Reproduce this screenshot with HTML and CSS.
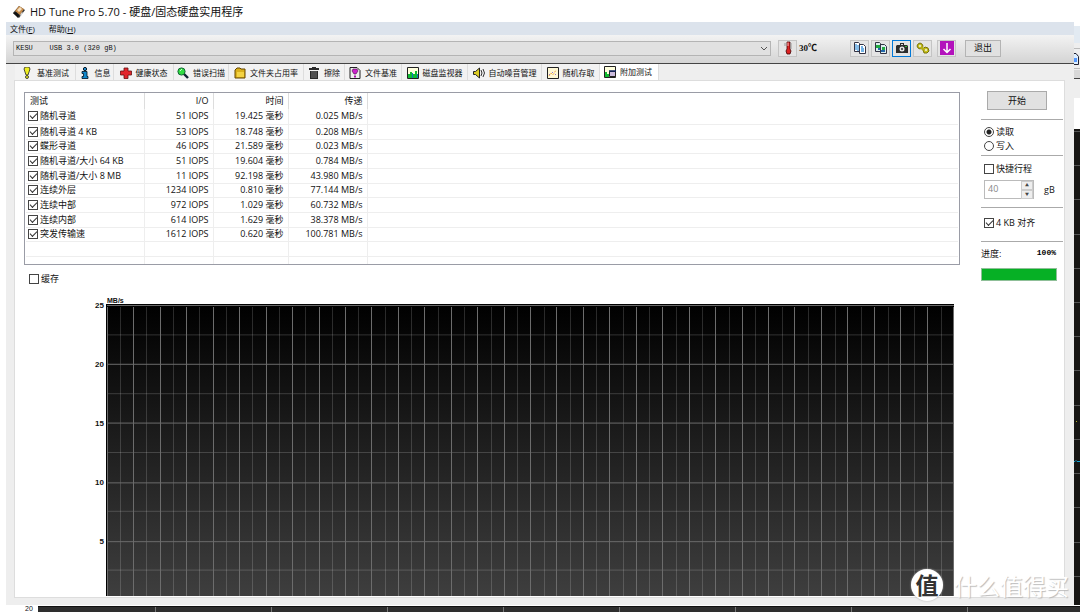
FILE: index.html
```html
<!DOCTYPE html>
<html lang="zh-CN">
<head>
<meta charset="utf-8">
<title>HD Tune Pro 5.70 - 硬盘/固态硬盘实用程序</title>
<link rel="stylesheet" href="styles.css">
</head>
<body>
<div class="desktop">
<main class="window">
  <header class="title">
    <svg class="logo" viewBox="0 0 14 14"><path d="M1 8 7 1l6 4-6 8z" fill="#333"/><path d="m3 6 4-5 5 3-4 6z" fill="#c58a4a"/><path d="m5 5 3-3 2 2-3 3z" fill="#f4dfc0"/><path d="m1 8 3-1 3 3-1 3z" fill="#111"/><path d="m8 10 2-3 1 1-2 3z" fill="#ddd"/></svg>
    <h1>HD Tune Pro 5.70 - 硬盘/固态硬盘实用程序</h1>
  </header>
  <nav class="menu"><button>文件(<u>F</u>)</button><button>帮助(<u>H</u>)</button></nav>
  <div class="toolbar">
    <div class="drive">
      <select aria-label="驱动器"><option>KESU&nbsp;&nbsp;&nbsp;&nbsp;USB 3.0 (320 gB)</option></select>
      <svg viewBox="0 0 8 5"><path d="m1 1 3 3 3-3" fill="none" stroke="#555"/></svg>
    </div>
    <button class="tool" aria-label="温度"><svg viewBox="0 0 14 14"><path d="M6 1h3v7l1 2-1 3H6l-1-3 1-2z" fill="#d22" stroke="#400" stroke-width=".8"/><path d="M10 2v6M4 2v3" stroke="#999"/><path d="M6.500 1.500h1V5h-1z" fill="#fbb"/></svg></button>
    <output class="temp">30℃</output>
    <div class="tools">
      <button class="tool" aria-label="复制信息"><svg viewBox="0 0 14 14"><path d="M1.500 1.500h4l1 1v8h-5zM6.500 3.500h4l2 2v7h-6z" fill="#fff" stroke="#334"/><path d="M3 3v6M5 4v6M8 6h2M8 8h3M8 10h3" stroke="#49d" stroke-width="1.300"/></svg></button>
      <button class="tool" aria-label="复制截图"><svg viewBox="0 0 14 14"><path d="M1.500 1.500h4l1 1v8h-5zM6.500 3.500h4l2 2v7h-6z" fill="#dee" stroke="#334"/><path d="M2 4h4v3H2zM8 6h3v3H8z" fill="#2a4"/><path d="M4 7h2v2H4zM7 9h4v2H7z" fill="#26a"/></svg></button>
      <button class="tool active" aria-label="保存截图"><svg viewBox="0 0 14 14"><path d="M1 5l1-1h3V2h4v2h3l1 1v7H1z" fill="#2c2c2c"/><path d="M6 3h2v1H6z" fill="#ddd"/><circle cx="7" cy="8" r="2.500" fill="#eee"/><circle cx="7" cy="8" r="1.200" fill="#555"/><path d="M10 5h2v1h-2z" fill="#3b3"/></svg></button>
      <button class="tool" aria-label="选项"><svg viewBox="0 0 14 14"><path d="m2 3 2-1 2 1 1 2-1 2-2 1-2-1-1-2zM7 8l2-2 3 1 1 3-2 2-3 0z" fill="#c9c41c" stroke="#77700a"/><path d="m5 6 3 3" stroke="#b3ad18" stroke-width="3"/><circle cx="4" cy="5" r="1" fill="#eee"/><circle cx="10" cy="9" r="1" fill="#eee"/></svg></button>
      <button class="tool save" aria-label="保存"><svg viewBox="0 0 14 14"><path d="M0 0h14v14H0z" fill="#b312bc"/><path d="M7 2v9M3.500 8 7 11.500 10.500 8" stroke="#fff" stroke-width="1.500" fill="none"/></svg></button>
      <button class="exit">退出</button>
    </div>
  </div>
  <div class="tabs" role="tablist">
    <button role="tab"><svg viewBox="0 0 12 12"><path d="M4 0h4l1 2-2 6H5L3 2z" fill="#ee2" stroke="#222" stroke-width=".8"/><circle cx="6" cy="10" r="1.500" fill="#ee2" stroke="#222" stroke-width=".8"/></svg>基准测试</button>
    <button role="tab"><svg viewBox="0 0 12 12"><circle cx="6" cy="2" r="1.600" fill="#29d" stroke="#012"/><path d="M3 4.500h5v5h1v2H3v-2h1.500v-3H3z" fill="#18c" stroke="#012" stroke-width=".8"/></svg>信息</button>
    <button role="tab"><svg viewBox="0 0 12 12"><path d="M4 1h4v3h3.500v4H8v3.500H4V8H.5V4H4z" fill="#e2262c" stroke="#611" stroke-width=".8"/></svg>健康状态</button>
    <button role="tab"><svg viewBox="0 0 12 12"><path d="m7 7 4 4" stroke="#123" stroke-width="2.400"/><circle cx="4.500" cy="4.500" r="3.600" fill="#3d4" stroke="#163"/><path d="m3 4 2-2" stroke="#cfc"/></svg>错误扫描</button>
    <button role="tab"><svg viewBox="0 0 12 12"><path d="M1 3 3 1h3l1 1h4v9H1z" fill="#dbb11c" stroke="#654700"/><path d="M3 5h7v5H3z" fill="#f4d343"/></svg>文件夹占用率</button>
    <button role="tab"><svg viewBox="0 0 12 12"><path d="M1 1h3V0h4v1h3v2H1zM2 4h8v8H2z" fill="#2a2a2a"/><path d="M4 4v7M6 4v7M8 4v7" stroke="#999" stroke-width=".7"/></svg>擦除</button>
    <button role="tab"><svg viewBox="0 0 12 12"><path d="M1 .5h7l3 3v8H1z" fill="#eee" stroke="#222"/><path d="M4 2h4l1 2-2 3H5L3 4z" fill="#c2c" stroke="#414" stroke-width=".6"/><path d="M5 8.500h2v2H5z" fill="#a1a"/></svg>文件基准</button>
    <button role="tab"><svg viewBox="0 0 12 12"><path d="M.5.5h11v11H.5z" fill="#ffd" stroke="#222"/><path d="M1 7h2v4H1zM3 5h2v6H3zM6 7h2v4H6zM8 4h2v7H8z" fill="#1b3"/><path d="M5 6h1v5H5zM10 7h1v4h-1z" fill="#17b"/></svg>磁盘监视器</button>
    <button role="tab"><svg viewBox="0 0 12 12"><path d="M.5 4.500h2L6.500 1v10l-4-3.500h-2z" fill="#dc2" stroke="#222"/><path d="m8 3 1 3-1 3M10 2l1.500 4L10 10" fill="none" stroke="#333"/></svg>自动噪音管理</button>
    <button role="tab"><svg viewBox="0 0 12 12"><path d="M.5.5h11v11H.5z" fill="#fff8d5" stroke="#222"/><path d="m2 9 2-3 2 2 3-5" stroke="#e92" fill="none" stroke-dasharray="1 1"/><path d="M2 7h1v1H2zM5 5h1v1H5zM8 7h1v1H8z" fill="#97c"/></svg>随机存取</button>
    <button role="tab" aria-selected="true" class="current"><svg viewBox="0 0 12 12"><path d="M.5.5h11v11H.5z" fill="#ffd" stroke="#222"/><path d="M1 6h2v5H1zM3 8h2v3H3z" fill="#1b3"/><path d="M5.500 5.500h6v5h-6z" fill="#cbd" stroke="#222"/><path d="M5 5h7" stroke="#126" stroke-width="1.500"/></svg>附加测试</button>
  </div>
  <section class="panel">
    <div class="results">
      <div class="list">
        <table>
          <colgroup><col class="c-name"><col class="c-io"><col class="c-time"><col class="c-rate"><col></colgroup>
          <thead><tr><th>测试</th><th>I/O</th><th>时间</th><th>传递</th><th></th></tr></thead>
          <tbody>
            <tr><td><label><input type="checkbox" checked>随机寻道</label></td><td>51 IOPS</td><td>19.425 毫秒</td><td>0.025 MB/s</td><td></td></tr>
            <tr><td><label><input type="checkbox" checked>随机寻道 4 KB</label></td><td>53 IOPS</td><td>18.748 毫秒</td><td>0.208 MB/s</td><td></td></tr>
            <tr><td><label><input type="checkbox" checked>蝶形寻道</label></td><td>46 IOPS</td><td>21.589 毫秒</td><td>0.023 MB/s</td><td></td></tr>
            <tr><td><label><input type="checkbox" checked>随机寻道/大小 64 KB</label></td><td>51 IOPS</td><td>19.604 毫秒</td><td>0.784 MB/s</td><td></td></tr>
            <tr><td><label><input type="checkbox" checked>随机寻道/大小 8 MB</label></td><td>11 IOPS</td><td>92.198 毫秒</td><td>43.980 MB/s</td><td></td></tr>
            <tr><td><label><input type="checkbox" checked>连续外层</label></td><td>1234 IOPS</td><td>0.810 毫秒</td><td>77.144 MB/s</td><td></td></tr>
            <tr><td><label><input type="checkbox" checked>连续中部</label></td><td>972 IOPS</td><td>1.029 毫秒</td><td>60.732 MB/s</td><td></td></tr>
            <tr><td><label><input type="checkbox" checked>连续内部</label></td><td>614 IOPS</td><td>1.629 毫秒</td><td>38.378 MB/s</td><td></td></tr>
            <tr><td><label><input type="checkbox" checked>突发传输速</label></td><td>1612 IOPS</td><td>0.620 毫秒</td><td>100.781 MB/s</td><td></td></tr>
            <tr><td></td><td></td><td></td><td></td><td></td></tr>
            <tr class="last"><td></td><td></td><td></td><td></td><td></td></tr>
          </tbody>
        </table>
      </div>
      <label class="cache"><input type="checkbox">缓存</label>
      <div class="chart">
        <div class="scale"><span>25</span><span>20</span><span>15</span><span>10</span><span>5</span></div>
        <div class="plot">
          <span class="unit">MB/s</span>
          <svg viewBox="0 0 848 293" preserveAspectRatio="none">
            <defs><linearGradient id="bg" x2="0" y2="1"><stop offset="0" stop-color="#000"/><stop offset="1" stop-color="#3e3e3e"/></linearGradient></defs>
            <path d="M0 0h848v293H0z" fill="url(#bg)"/>
            <path d="M14 148h834" stroke="#fff" stroke-opacity=".16" stroke-width="290" stroke-dasharray="1 25.470"/>
            <path d="M0 31h848M0 90h848M0 149h848M0 208h848M0 267h848" stroke="#fff" stroke-opacity=".18"/>
            <path d="M1 148h847" stroke="#6c6c6c" stroke-width="290" stroke-dasharray="1 25.440"/>
            <path d="M0 1.500h848M0 60.500h848M0 119.500h848M0 179.500h848M0 238.500h848" stroke="#6c6c6c"/>
            <path d="M.5 0v293M0 .5h848" stroke="#000"/>
          </svg>
        </div>
      </div>
    </div>
    <aside class="side">
      <button class="start">开始</button>
      <fieldset class="modes">
        <label><input type="radio" name="mode" checked>读取</label>
        <label><input type="radio" name="mode">写入</label>
      </fieldset>
      <div class="stroke">
        <label><input type="checkbox">快捷行程</label>
        <div class="size">
          <div class="spin"><input type="text" value="40" aria-label="行程容量" disabled><div><button aria-label="增加" disabled>▲</button><button aria-label="减少" disabled>▼</button></div></div>
          <span>gB</span>
        </div>
      </div>
      <div class="align"><label><input type="checkbox" checked>4 KB 对齐</label></div>
      <div class="status"><span>进度:</span><b>100%</b></div>
      <div class="bar" role="progressbar" aria-label="进度" aria-valuenow="100"></div>
    </aside>
  </section>
</main>
<svg class="behind-right" viewBox="0 0 6 605" preserveAspectRatio="xMinYMin slice">
  <path d="M0 0h6v605H0z" fill="#fff"/><path d="M0 26h6v17H0z" fill="#e2eaf2"/><path d="M0 43h6v55H0z" fill="#eee"/>
  <path d="M0 48.500h6M0 68.500h6" stroke="#bbb"/><path d="M0 53.500h2l2.500 3v8H0" fill="#def" stroke="#223"/><path d="M0 58h3v4H0z" fill="#59f"/><path d="M0 70h6v8H0z" fill="#d8d8d8"/><path d="M0 78.500h6" stroke="#444"/>
  <path d="M0 129h6v476H0z" fill="#171614"/><path d="M0 131.500h6M0 165.500h6M0 199.500h6M0 234.500h6M0 268.500h6M0 302.500h6M0 336.500h6M0 370.500h6M0 405.500h6M0 439.500h6M0 473.500h6M0 507.500h6M0 542.500h6M0 576.500h6" stroke="#555"/>
  <path d="M0 461.500h1l1-1 1 1h3" stroke="#17a7d8" fill="none"/><path d="M2 421h1v1H2z" fill="#aa2"/>
</svg>
</div>
<footer class="behind-bottom"><span>20</span><div><i></i><i></i><i></i><i></i><i></i><i></i><i></i><i></i></div></footer>
<div class="watermark"><b>值</b><span>什么值得买</span></div>
</body>
</html>
```
FILE: styles.css
```css
* { box-sizing: border-box; }
body {
  margin: 0;
  height: 100vh;
  overflow: hidden;
  display: flex;
  flex-direction: column;
  background: #fff;
  color: #111;
  font: 9px/14px "Open Sans", "Noto Sans CJK SC", sans-serif;
}
button, input, select { font: inherit; color: inherit; margin: 0; padding: 0; border: 0; background: none; }
.desktop { flex: 1; min-height: 0; display: flex; padding-left: 6px; }
.window { flex: 1; min-width: 0; display: flex; flex-direction: column; background: #eee; }
.behind-right { width: 6px; height: 100%; }

.title { height: 22px; padding: 2px 6px 0; display: flex; align-items: center; gap: 4px; background: #fff; }
.title h1 { margin: 0; font-size: 11px; font-weight: 400; line-height: 20px; }
.logo { width: 14px; height: 14px; }
.menu { height: 13px; padding-left: 4px; display: flex; gap: 14px; background: #dce3ec; }
.menu button { line-height: 13px; font-size: 8px; }

.toolbar {
  height: 29px;
  padding: 4px 73px 6px 7px;
  display: flex;
  align-items: center;
  background: linear-gradient(#f3f3f3, #d4d4d4);
  border-bottom: 1px solid #444;
}
.drive { flex: 1; position: relative; height: 15px; }
.drive select {
  appearance: none;
  display: block;
  width: 100%;
  height: 15px;
  padding-left: 2px;
  border: 1px solid #b4b4b4;
  background: #e1e1e1;
  font: 7px/13px "Liberation Mono", monospace;
}
.drive svg { position: absolute; right: 3px; top: 5px; width: 8px; height: 5px; }
.tool {
  width: 19px;
  height: 17px;
  display: grid;
  place-items: center;
  border: 1px solid #c4c4c4;
  background: #e4e4e4;
}
.tool svg { width: 14px; height: 14px; }
.drive + .tool { margin-left: 7px; }
.active { border: 1px solid #0078d7; }
.temp { width: 53px; padding-left: 2px; font: bold 9px/14px "Liberation Serif", "Noto Sans CJK SC", serif; }
.tools { display: flex; gap: 2px; }
.save { margin-left: 3px; }
.exit { width: 36px; height: 17px; margin-left: 7px; border: 1px solid #b4b4b4; background: #e1e1e1; line-height: 14px; }

.tabs {
  height: 16px;
  padding-left: 9px;
  display: grid;
  grid-template-columns: 61px 38px 60px 55px 75px 41px 57px 66px 74px 58px 59px;
}
.tabs button { display: flex; align-items: center; justify-content: center; gap: 4px; padding-top: 2px; border-right: 1px solid #ddd; background: #f2f2f2; font-size: 8px; white-space: nowrap; }
.tabs svg { width: 12px; height: 12px; flex: none; }
.tabs .current { background: #fff; padding: 0 2px 0 0; }

.panel {
  flex: 1;
  min-height: 0;
  margin: 0 9px 7px 8px;
  padding: 11px 1px 0 9px;
  display: grid;
  grid-template-columns: minmax(0, 1fr) 82px;
  gap: 21px;
  background: #fff;
  border: 1px solid #ddd;
}
.results { display: flex; flex-direction: column; min-height: 0; }
.list { height: 173px; overflow: hidden; border: 1px solid #9a9ca6; padding: 0 1px; }
table { width: 100%; table-layout: fixed; border-collapse: collapse; line-height: 12px; }
.c-name { width: 118px; }
.c-io { width: 69px; }
.c-time { width: 75px; }
.c-rate { width: 79px; }
th, td { height: 15px; padding: 0 4px; text-align: right; font-weight: 400; border-bottom: 1px solid #eee; border-right: 1px solid #eee; white-space: nowrap; }
th { height: 16px; border-bottom: 0; border-color: #ddd; }
th:first-child, td:first-child { text-align: left; }
td:first-child { padding-left: 2px; }
th:last-child, td:last-child { border-right: 0; }
tbody tr:nth-child(3n) td { height: 14px; }
.last td { border-bottom: 0; }
label { display: flex; align-items: center; gap: 2px; }
input[type="checkbox"], input[type="radio"] {
  appearance: none;
  flex: none;
  width: 10px;
  height: 10px;
  border: 1px solid #444;
  background: #fff;
}
input[type="checkbox"]:checked::after {
  content: "";
  display: block;
  width: 6px;
  height: 3px;
  margin: 2px 0 0 1px;
  border: solid #333;
  border-width: 0 0 1px 1px;
  transform: rotate(-45deg);
}
input[type="checkbox"]:checked::after { margin-top: 1px; }
input[type="radio"] { border-radius: 50%; }
input[type="radio"]:checked { background: radial-gradient(circle, #222 2px, #fff 3px); }
.cache { margin: 7px 0 0 5px; }

.chart { flex: 1; min-height: 0; margin-top: 18px; padding: 0 6px 1px 0; display: flex; }
.scale { width: 82px; padding-right: 2px; font: bold 8px/14px "Liberation Sans", sans-serif; text-align: right; }
.scale span { display: block; height: 59px; }
.scale span:first-child { margin-top: -5px; }
.plot { flex: 1; position: relative; }
.plot svg { display: block; width: 100%; height: 100%; shape-rendering: crispEdges; }
.unit { position: absolute; left: 1px; top: -8px; font: bold 7px/10px "Liberation Sans", sans-serif; }

.side { display: flex; flex-direction: column; }
.start { width: 60px; height: 19px; margin: -1px 0 9px 6px; border: 1px solid #aaa; background: #e1e1e1; line-height: 16px; }
.modes, .stroke, .align { margin: 0; border: 0; border-top: 1px solid #aaa; padding: 5px 0 0 3px; min-width: 0; }
.modes { height: 36px; }
.stroke { height: 52px; padding-top: 6px; }
.align { height: 34px; padding-top: 8px; }
.size { display: flex; align-items: center; gap: 10px; margin-top: 4px; }
.spin { width: 50px; height: 19px; display: flex; border: 1px solid #bbb; }
.spin input { flex: 1; min-width: 0; padding: 0 0 2px 3px; color: #888; background: #fff; }
.spin div { width: 12px; display: flex; flex-direction: column; background: #eee; }
.spin button { flex: 1; font-size: 4px; line-height: 7px; border: 1px solid #ccc; color: #444; }
.status { height: 27px; padding: 5px 7px 0 0; display: flex; justify-content: space-between; border-top: 1px solid #aaa; }
.status b { font: bold 8px/12px "Liberation Mono", monospace; color: #000; }
.bar { width: 76px; height: 13px; background: #06b025; border: 1px solid #8fbf98; }

.behind-bottom { height: 7px; padding-left: 16px; display: flex; background: #fff; font: 7px/7px "Liberation Sans", sans-serif; }
.behind-bottom span { width: 22px; padding-left: 9px; }
.behind-bottom div { flex: 1; min-width: 0; display: flex; margin-top: 1px; background: #2e2e2e; border-top: 1px solid #111; padding-left: 117px; gap: 115px; }
.behind-bottom i { width: 1px; flex: none; background: #777; }
.watermark { position: absolute; right: 11px; bottom: 11px; display: flex; align-items: center; gap: 11px; font-family: "Noto Sans CJK SC", sans-serif; }
.watermark b { width: 32px; height: 32px; border-radius: 50%; background: #fff; box-shadow: 0 0 2px #aaa; color: #333; font-size: 23px; line-height: 30px; text-align: center; }
.watermark span { color: #fff; font-size: 23px; line-height: 30px; text-shadow: 1px 1px 1px #bbb; }
```
